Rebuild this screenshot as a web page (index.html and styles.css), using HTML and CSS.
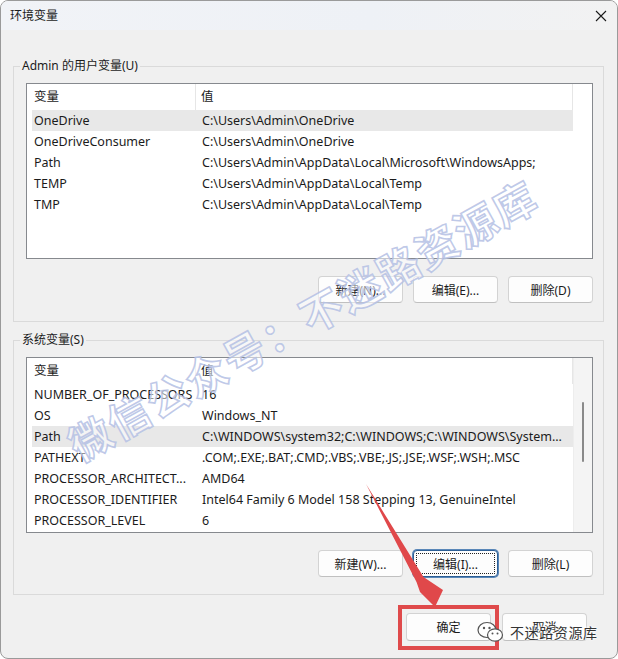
FILE: index.html
```html
<!DOCTYPE html>
<html lang="zh-CN">
<head>
    <meta charset="UTF-8">
    <title>环境变量</title>
    <link rel="stylesheet" href="styles.css">
</head>
<body>

    <div class="window">
        <!-- Title bar -->
        <div class="titlebar">
            <span class="title">环境变量</span>
            <svg class="close" width="12" height="12" viewBox="0 0 12 12">
                <path d="M1 1 L11 11 M11 1 L1 11" stroke="#1a1a1a" stroke-width="1.1" fill="none"/>
            </svg>
        </div>

        <!-- User variables -->
        <fieldset class="group">
            <legend>Admin 的用户变量(U)</legend>
            <div class="list">
                <div class="list-body">
                    <div class="list-head">
                        <span class="head-name">变量</span>
                        <span class="head-val">值</span>
                    </div>
                    <div class="row selected"><span class="cell-name">OneDrive</span><span class="cell-val">C:\Users\Admin\OneDrive</span></div>
                    <div class="row"><span class="cell-name">OneDriveConsumer</span><span class="cell-val">C:\Users\Admin\OneDrive</span></div>
                    <div class="row"><span class="cell-name">Path</span><span class="cell-val">C:\Users\Admin\AppData\Local\Microsoft\WindowsApps;</span></div>
                    <div class="row"><span class="cell-name">TEMP</span><span class="cell-val">C:\Users\Admin\AppData\Local\Temp</span></div>
                    <div class="row"><span class="cell-name">TMP</span><span class="cell-val">C:\Users\Admin\AppData\Local\Temp</span></div>
                </div>
                <div class="gutter"></div>
            </div>
            <div class="btns">
                <button class="btn">新建(N)...</button>
                <button class="btn">编辑(E)...</button>
                <button class="btn">删除(D)</button>
            </div>
        </fieldset>

        <!-- System variables -->
        <fieldset class="group group-sys">
            <legend>系统变量(S)</legend>
            <div class="list">
                <div class="list-body">
                    <div class="list-head">
                        <span class="head-name">变量</span>
                        <span class="head-val">值</span>
                    </div>
                    <div class="row"><span class="cell-name">NUMBER_OF_PROCESSORS</span><span class="cell-val">16</span></div>
                    <div class="row"><span class="cell-name">OS</span><span class="cell-val">Windows_NT</span></div>
                    <div class="row selected"><span class="cell-name">Path</span><span class="cell-val">C:\WINDOWS\system32;C:\WINDOWS;C:\WINDOWS\System...</span></div>
                    <div class="row"><span class="cell-name">PATHEXT</span><span class="cell-val">.COM;.EXE;.BAT;.CMD;.VBS;.VBE;.JS;.JSE;.WSF;.WSH;.MSC</span></div>
                    <div class="row"><span class="cell-name">PROCESSOR_ARCHITECT...</span><span class="cell-val">AMD64</span></div>
                    <div class="row"><span class="cell-name">PROCESSOR_IDENTIFIER</span><span class="cell-val">Intel64 Family 6 Model 158 Stepping 13, GenuineIntel</span></div>
                    <div class="row"><span class="cell-name">PROCESSOR_LEVEL</span><span class="cell-val">6</span></div>
                </div>
                <div class="vscroll"><div class="thumb"></div></div>
            </div>
            <div class="btns">
                <button class="btn">新建(W)...</button>
                <button class="btn focused">编辑(I)...</button>
                <button class="btn">删除(L)</button>
            </div>
        </fieldset>

        <!-- Dialog buttons -->
        <div class="footer">
            <button class="btn btn-main">确定</button>
            <button class="btn btn-main">取消</button>
        </div>

        <!-- Overlays: watermark, annotation arrow -->
        <div class="watermark">微信公众号：不迷路资源库</div>

        <svg class="annot" width="618" height="659" viewBox="0 0 618 659">
            <polygon points="366,484 423.5,577 443,590 435,607 420,592 416.5,582" fill="#e0484a"/>
            <rect x="400" y="607" width="97" height="41" fill="none" stroke="#df4a4b" stroke-width="4"/>
        </svg>

        <div class="wx-mark">
            <svg width="27" height="22" viewBox="0 0 27 22">
                <ellipse cx="10" cy="9" rx="9" ry="7.5" fill="#fff" stroke="#555" stroke-width="1.2"/>
                <ellipse cx="18" cy="14" rx="7.5" ry="6.2" fill="#fff" stroke="#555" stroke-width="1.2"/>
                <circle cx="7" cy="7" r="1.2" fill="#555"/>
                <circle cx="12.5" cy="7" r="1.2" fill="#555"/>
                <circle cx="15.5" cy="12.5" r="1" fill="#555"/>
                <circle cx="20.5" cy="12.5" r="1" fill="#555"/>
            </svg>
            <span>不迷路资源库</span>
        </div>
    </div>

</body>
</html>
```

FILE: styles.css
```css
* {
    box-sizing: border-box;
}
body {
    margin: 0;
    font-family: "Noto Sans", "Noto Sans CJK SC", sans-serif;
    font-size: 12px;
    color: #1b1b1b;
    background: #fff;
}
.window {
    position: relative;
    width: 618px;
    height: 659px;
    background: #f0f0f0;
    border: 1px solid #9a9a9a;
    border-radius: 8px;
    overflow: hidden;
    display: flex;
    flex-direction: column;
}
.titlebar {
    height: 29px;
    display: flex;
    align-items: center;
    justify-content: space-between;
    padding: 0 10px 0 9px;
    background: linear-gradient(to right, #f1f3f7, #eef1f6 60%, #f2f2f2);
}
.title {
    line-height: 16px;
    padding-top: 1px;
}

/* Group boxes */
.group {
    margin: 27px 13px 0 12px;
    padding: 8px 10px 18px 0;
    border: 1px solid #dadada;
    min-width: 0;
}
.group legend {
    margin-left: 6px;
    padding: 0 2px;
    line-height: 18px;
}
.group-sys {
    margin-top: 9px;
    padding-bottom: 17px;
}
.list {
    margin-left: 12px;
    height: 176px;
    border: 1px solid #86898e;
    background: #fff;
    display: flex;
    font-size: 12.5px;
}
.list-body {
    flex: 1;
}
.gutter {
    width: 19px;
}
.list-head {
    height: 26px;
    display: flex;
    align-items: center;
}
.head-name {
    width: 169px;
    height: 100%;
    padding-left: 7px;
    line-height: 26px;
    border-right: 1px solid #e6e6e6;
}
.head-val {
    flex: 1;
    height: 100%;
    padding-left: 5px;
    line-height: 26px;
    border-right: 1px solid #e6e6e6;
}
.row {
    margin-left: 5px;
    height: 21px;
    line-height: 21px;
    display: flex;
    white-space: nowrap;
}
.row.selected {
    background: #e8e8e8;
}
.cell-name {
    width: 170px;
    padding-left: 2px;
}
.vscroll {
    width: 19px;
    background: #f4f4f4;
    border-left: 1px solid #ededed;
    padding-top: 44px;
    display: flex;
    justify-content: center;
}
.thumb {
    width: 2px;
    height: 60px;
    background: #8a8a8a;
    border-radius: 1px;
}

/* Buttons */
.btns {
    margin-top: 17px;
    display: flex;
    justify-content: flex-end;
    gap: 10px;
}
.btn {
    position: relative;
    width: 85px;
    height: 27px;
    font-family: inherit;
    font-size: 12px;
    color: #1b1b1b;
    background: #fdfdfd;
    border: 1px solid #d3d3d3;
    border-bottom-color: #c0c0c0;
    border-radius: 4px;
    padding: 0;
}
.btn.focused {
    border: 1px solid #2d5f95;
    box-shadow: 0 0 0 1px #5a87b8;
}
.btn.focused::after {
    content: "";
    position: absolute;
    inset: 2px;
    border: 1px dotted #222;
}
.footer {
    margin-top: 18px;
    padding-right: 30px;
    display: flex;
    justify-content: flex-end;
    gap: 11px;
}
.btn-main {
    height: 28px;
}

/* Overlays */
.watermark {
    position: absolute;
    left: 36px;
    top: 293px;
    width: 530px;
    line-height: 50px;
    text-align: center;
    font-family: "Noto Sans CJK SC", sans-serif;
    font-size: 42px;
    font-weight: bold;
    letter-spacing: 2px;
    color: rgba(255, 255, 255, 0.55);
    -webkit-text-stroke: 1.6px rgba(180, 192, 228, 0.85);
    transform: rotate(-29deg);
    white-space: nowrap;
}
.annot {
    position: absolute;
    left: -1px;
    top: -1px;
}
.wx-mark {
    position: absolute;
    left: 476px;
    top: 620px;
    display: flex;
    align-items: center;
    gap: 6px;
}
.wx-mark span {
    font-family: "Noto Sans CJK SC", sans-serif;
    font-size: 14px;
    letter-spacing: 0.6px;
    color: #333;
    text-shadow: 0 0 2px #fff, 0 0 2px #fff, 0 0 3px #fff;
}
```
